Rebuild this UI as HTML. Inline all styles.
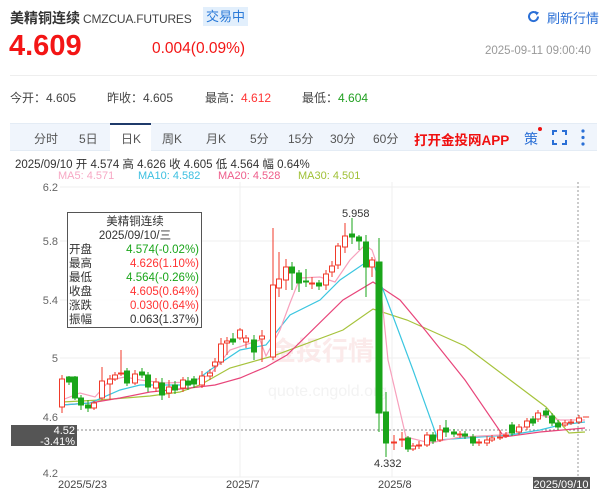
<!DOCTYPE html>
<html><head><meta charset="utf-8"><style>
*{margin:0;padding:0;box-sizing:border-box}
body{width:600px;height:489px;background:#fff;font-family:"Liberation Sans","Noto Sans CJK SC",sans-serif;position:relative;overflow:hidden;color:#333}
.a{position:absolute;white-space:nowrap}
</style></head><body>
<div class="a" style="left:10px;top:8px;font-size:14px;color:#333"><b style="font-weight:600">美精铜连续</b><span style="font-size:12px;color:#444;margin-left:3px;letter-spacing:-0.2px">CMZCUA.FUTURES</span></div>
<div class="a" style="left:203px;top:7px;width:45px;height:19px;background:#e2effc;color:#2a7ad8;font-size:13px;text-align:center;line-height:19px">交易中</div>
<svg class="a" style="left:527px;top:10px" width="13" height="13" viewBox="0 0 13 13"><path d="M11 6.5A4.5 4.5 0 1 1 9.5 3.2" fill="none" stroke="#2a6fd6" stroke-width="2"/><path d="M8 1L12 2.5 9.5 5.5Z" fill="#2a6fd6"/></svg>
<div class="a" style="left:547px;top:8px;font-size:13px;color:#2a6fd6">刷新行情</div>
<div class="a" style="left:9px;top:30px;font-size:29px;font-weight:bold;color:#f31515">4.609</div>
<div class="a" style="left:152px;top:40px;font-size:15.5px;color:#f31515">0.004(0.09%)</div>
<div class="a" style="left:485px;top:45px;font-size:11.5px;color:#999">2025-09-11 09:00:40</div>
<div class="a" style="left:10px;top:75px;width:587px;height:1px;background:#eee"></div>
<div class="a" style="left:10px;top:89px;font-size:12px;color:#444">今开：4.605</div>
<div class="a" style="left:107px;top:89px;font-size:12px;color:#444">昨收：4.605</div>
<div class="a" style="left:205px;top:89px;font-size:12px;color:#444">最高：<span style="color:#f33">4.612</span></div>
<div class="a" style="left:302px;top:89px;font-size:12px;color:#444">最低：<span style="color:#22a022">4.604</span></div>
<div class="a" style="left:10px;top:123px;width:587px;height:28px;background:#f0f5fc;border-top:1px solid #e4ecf5;border-bottom:1px solid #e4ecf5"></div>
<div class="a" style="left:110px;top:123px;width:41px;height:28px;background:#fff;border-top:2px solid #1f3a6a"></div>
<div class="a" style="left:0;top:130px;font-size:12px;color:#555;width:600px">
<span class="a" style="left:34px">分时</span><span class="a" style="left:79px">5日</span><span class="a" style="left:121px">日K</span><span class="a" style="left:162px">周K</span><span class="a" style="left:206px">月K</span><span class="a" style="left:250px">5分</span><span class="a" style="left:288px">15分</span><span class="a" style="left:330px">30分</span><span class="a" style="left:373px">60分</span></div>
<div class="a" style="left:414px;top:129px;font-size:13.5px;font-weight:bold;color:#f01010">打开金投网APP</div>
<div class="a" style="left:524px;top:129px;font-size:14px;color:#2a6fd6">策</div>
<div class="a" style="left:538px;top:127px;width:4px;height:4px;border-radius:50%;background:#e11"></div>
<svg class="a" style="left:552px;top:130px" width="15" height="15" viewBox="0 0 15 15" fill="none" stroke="#2a6fd6" stroke-width="2"><path d="M1 5V1H5M10 1H14V5M14 10V14H10M5 14H1V10"/></svg>
<svg class="a" style="left:581px;top:129px" width="4" height="17"><circle cx="2" cy="2" r="1.6" fill="#2a6fd6"/><circle cx="2" cy="8.5" r="1.6" fill="#2a6fd6"/><circle cx="2" cy="15" r="1.6" fill="#2a6fd6"/></svg>
<div class="a" style="left:15px;top:156px;font-size:11.5px;color:#333">2025/09/10 开 4.574 高 4.626 收 4.605 低 4.564 幅 0.64%</div>
<div class="a" style="left:58px;top:170px;font-size:11px;color:#f7a8c4">MA5: 4.571</div>
<div class="a" style="left:138px;top:170px;font-size:11px;color:#3bbfe0">MA10: 4.582</div>
<div class="a" style="left:218px;top:170px;font-size:11px;color:#ee5c8a">MA20: 4.528</div>
<div class="a" style="left:298px;top:170px;font-size:11px;color:#9fc035">MA30: 4.501</div>
<svg class="a" style="left:0;top:0" width="600" height="489">
<g stroke="#efefef" stroke-width="1">
<line x1="60" y1="187" x2="590" y2="187"/><line x1="60" y1="241" x2="590" y2="241"/><line x1="60" y1="300" x2="590" y2="300"/><line x1="60" y1="358" x2="590" y2="358"/><line x1="60" y1="417" x2="590" y2="417"/><line x1="60" y1="477" x2="590" y2="477"/>
<line x1="240" y1="182" x2="240" y2="477"/><line x1="392" y1="182" x2="392" y2="477"/>
</g>
<g font-size="11" fill="#666" text-anchor="end"><text x="58" y="191">6.2</text><text x="58" y="245">5.8</text><text x="58" y="304">5.4</text><text x="58" y="362">5</text><text x="58" y="421">4.6</text><text x="58" y="477">4.2</text></g>
<text x="270" y="360" font-size="26" fill="#fbeaea" font-weight="bold">金投行情</text>
<text x="268" y="396" font-size="16" fill="#f3f3f3">quote.cngold.org</text>
<line x1="578" y1="182" x2="578" y2="477" stroke="#999" stroke-dasharray="2,2"/>
<line x1="77" y1="430" x2="590" y2="430" stroke="#888" stroke-dasharray="2,2"/>
<g fill="none" stroke-width="1.2">
<polyline stroke="#a6c33c" points="62,402 100,400 150,396 180,392 200,385 230,368 273,356 343,330 373,309 407,320 465,346 546,407 569,433 585,432"/>
<polyline stroke="#e8457a" points="62,405 90,403 120,398 150,392 190,388 215,385 240,378 266,367 287,355 343,300 373,282 400,300 425,330 465,380 504,437 540,432 585,428"/>
<polyline stroke="#3bc6e0" points="62,405 90,403 120,390 140,385 170,385 190,385 210,370 240,350 266,345 290,315 320,300 340,280 365,263 372,260 413,370 438,440 480,437 510,435 540,430 560,425 585,422"/>
<polyline stroke="#f7a0bc" points="62,400 80,393 95,397 110,380 125,377 140,380 165,383 190,382 210,375 230,350 260,340 266,356 280,330 290,303 300,278 320,277 335,282 350,260 365,245 372,250 379,270 388,360 406,437 430,443 460,437 500,435 520,430 540,415 560,420 585,420"/>
</g>
<g stroke-width="1">
<g stroke="#f03a2a" fill="#fff">
<line x1="62" y1="375" x2="62" y2="413"/><rect x="59.5" y="379" width="5" height="28"/>
<line x1="94" y1="401" x2="94" y2="410"/><rect x="91.5" y="403" width="5" height="5"/>
<line x1="102" y1="367" x2="102" y2="400"/><rect x="99.5" y="381" width="5" height="17"/>
<line x1="110" y1="375" x2="110" y2="400"/><rect x="107.5" y="379" width="5" height="5"/>
<line x1="115" y1="372" x2="115" y2="381"/><rect x="112.5" y="375" width="5" height="4"/>
<line x1="121" y1="350" x2="121" y2="376"/><rect x="118.5" y="373" width="5" height="1"/>
<line x1="135" y1="370" x2="135" y2="385"/><rect x="132.5" y="374" width="5" height="9"/>
<line x1="156" y1="378" x2="156" y2="392"/><rect x="153.5" y="382" width="5" height="6"/>
<line x1="169" y1="380" x2="169" y2="398"/><rect x="166.5" y="387" width="5" height="6"/>
<line x1="183" y1="377" x2="183" y2="392"/><rect x="180.5" y="380" width="5" height="8"/>
<line x1="202" y1="371" x2="202" y2="388"/><rect x="199.5" y="376" width="5" height="9"/>
<line x1="210" y1="369" x2="210" y2="380"/><rect x="207.5" y="373" width="5" height="3"/>
<line x1="215" y1="358" x2="215" y2="372"/><rect x="212.5" y="362" width="5" height="4"/>
<line x1="221" y1="338" x2="221" y2="365"/><rect x="218.5" y="344" width="5" height="18"/>
<line x1="227" y1="337" x2="227" y2="355"/><rect x="224.5" y="341" width="5" height="2"/>
<line x1="240" y1="328" x2="240" y2="340"/><rect x="237.5" y="330" width="5" height="8"/>
<line x1="246" y1="335" x2="246" y2="348"/><rect x="243.5" y="338" width="5" height="4"/>
<line x1="262" y1="330" x2="262" y2="362"/><rect x="259.5" y="336" width="5" height="3"/>
<line x1="273" y1="228" x2="273" y2="360"/><rect x="270.5" y="285" width="5" height="72"/>
<line x1="279" y1="252" x2="279" y2="297"/><rect x="276.5" y="279" width="5" height="9"/>
<line x1="286" y1="259" x2="286" y2="290"/><rect x="283.5" y="267" width="5" height="13"/>
<line x1="312" y1="277" x2="312" y2="289"/><rect x="309.5" y="283" width="5" height="1"/>
<line x1="326" y1="270" x2="326" y2="290"/><rect x="323.5" y="274" width="5" height="11"/>
<line x1="332" y1="261" x2="332" y2="277"/><rect x="329.5" y="266" width="5" height="6"/>
<line x1="338" y1="243" x2="338" y2="269"/><rect x="335.5" y="246" width="5" height="19"/>
<line x1="345" y1="223" x2="345" y2="253"/><rect x="342.5" y="236" width="5" height="11"/>
<line x1="372" y1="257" x2="372" y2="277"/><rect x="369.5" y="260" width="5" height="7"/>
<line x1="394" y1="435" x2="394" y2="450"/><rect x="391.5" y="442" width="5" height="1"/>
<line x1="402" y1="432" x2="402" y2="447"/><rect x="399.5" y="439" width="5" height="1"/>
<line x1="413" y1="443" x2="413" y2="451"/><rect x="410.5" y="446" width="5" height="3"/>
<line x1="419" y1="441" x2="419" y2="449"/><rect x="416.5" y="445" width="5" height="1"/>
<line x1="427" y1="432" x2="427" y2="447"/><rect x="424.5" y="435" width="5" height="10"/>
<line x1="440" y1="425" x2="440" y2="442"/><rect x="437.5" y="430" width="5" height="10"/>
<line x1="460" y1="431" x2="460" y2="438"/><rect x="457.5" y="434" width="5" height="1"/>
<line x1="479" y1="439" x2="479" y2="446"/><rect x="476.5" y="442" width="5" height="1"/>
<line x1="487" y1="436" x2="487" y2="446"/><rect x="484.5" y="440" width="5" height="3"/>
<line x1="492" y1="435" x2="492" y2="442"/><rect x="489.5" y="438" width="5" height="2"/>
<line x1="500" y1="430" x2="500" y2="440"/><rect x="497.5" y="437" width="5" height="1"/>
<line x1="506" y1="432" x2="506" y2="438"/><rect x="503.5" y="435" width="5" height="1"/>
<line x1="519" y1="424" x2="519" y2="435"/><rect x="516.5" y="427" width="5" height="5"/>
<line x1="527" y1="418" x2="527" y2="430"/><rect x="524.5" y="421" width="5" height="6"/>
<line x1="538" y1="410" x2="538" y2="422"/><rect x="535.5" y="413" width="5" height="6"/>
<line x1="565" y1="420" x2="565" y2="427"/><rect x="562.5" y="423" width="5" height="2"/>
<line x1="571" y1="419" x2="571" y2="425"/><rect x="568.5" y="422" width="5" height="1"/>
<line x1="579" y1="415" x2="579" y2="424"/><rect x="576.5" y="418" width="5" height="4"/>
<line x1="583" y1="417" x2="589" y2="417"/>
</g>
<g stroke="#1aa51a" fill="#1aa51a">
<line x1="69" y1="376" x2="69" y2="385"/><rect x="66.5" y="377" width="5" height="5"/>
<line x1="75" y1="376" x2="75" y2="400"/><rect x="72.5" y="377" width="5" height="21"/>
<line x1="81" y1="395" x2="81" y2="410"/><rect x="78.5" y="398" width="5" height="7"/>
<line x1="88" y1="400" x2="88" y2="412"/><rect x="85.5" y="405" width="5" height="3"/>
<line x1="127" y1="368" x2="127" y2="386"/><rect x="124.5" y="371" width="5" height="12"/>
<line x1="142" y1="368" x2="142" y2="378"/><rect x="139.5" y="372" width="5" height="3"/>
<line x1="148" y1="372" x2="148" y2="392"/><rect x="145.5" y="375" width="5" height="12"/>
<line x1="162" y1="378" x2="162" y2="400"/><rect x="159.5" y="383" width="5" height="12"/>
<line x1="175" y1="381" x2="175" y2="394"/><rect x="172.5" y="385" width="5" height="5"/>
<line x1="188" y1="377" x2="188" y2="390"/><rect x="185.5" y="381" width="5" height="4"/>
<line x1="194" y1="376" x2="194" y2="388"/><rect x="191.5" y="379" width="5" height="5"/>
<line x1="233" y1="333" x2="233" y2="345"/><rect x="230.5" y="339" width="5" height="3"/>
<line x1="254" y1="335" x2="254" y2="360"/><rect x="251.5" y="340" width="5" height="12"/>
<line x1="292" y1="262" x2="292" y2="290"/><rect x="289.5" y="267" width="5" height="6"/>
<line x1="299" y1="270" x2="299" y2="292"/><rect x="296.5" y="273" width="5" height="10"/>
<line x1="306" y1="269" x2="306" y2="287"/><rect x="303.5" y="281" width="5" height="1"/>
<line x1="319" y1="280" x2="319" y2="290"/><rect x="316.5" y="283" width="5" height="3"/>
<line x1="352" y1="218" x2="352" y2="244"/><rect x="349.5" y="234" width="5" height="3"/>
<line x1="359" y1="235" x2="359" y2="250"/><rect x="356.5" y="237" width="5" height="4"/>
<line x1="366" y1="235" x2="366" y2="297"/><rect x="363.5" y="242" width="5" height="25"/>
<line x1="379" y1="238" x2="379" y2="432"/><rect x="376" y="262" width="6" height="151"/>
<line x1="386" y1="392" x2="386" y2="457"/><rect x="383.5" y="412" width="5" height="31"/>
<line x1="408" y1="436" x2="408" y2="452"/><rect x="405.5" y="438" width="5" height="11"/>
<line x1="433" y1="432" x2="433" y2="444"/><rect x="430.5" y="435" width="5" height="6"/>
<line x1="446" y1="420" x2="446" y2="437"/><rect x="443.5" y="428" width="5" height="4"/>
<line x1="454" y1="429" x2="454" y2="437"/><rect x="451.5" y="432" width="5" height="2"/>
<line x1="465" y1="431" x2="465" y2="439"/><rect x="462.5" y="434" width="5" height="2"/>
<line x1="473" y1="434" x2="473" y2="446"/><rect x="470.5" y="437" width="5" height="6"/>
<line x1="512" y1="422" x2="512" y2="436"/><rect x="509.5" y="425" width="5" height="8"/>
<line x1="533" y1="416" x2="533" y2="426"/><rect x="530.5" y="419" width="5" height="4"/>
<line x1="546" y1="408" x2="546" y2="418"/><rect x="543.5" y="411" width="5" height="4"/>
<line x1="552" y1="413" x2="552" y2="426"/><rect x="549.5" y="416" width="5" height="7"/>
<line x1="558" y1="420" x2="558" y2="430"/><rect x="555.5" y="423" width="5" height="4"/>
</g>
</g>
<text x="342" y="217" font-size="11" fill="#333">5.958</text>
<text x="374" y="467" font-size="11" fill="#333">4.332</text>
<rect x="11" y="425" width="66" height="21" fill="#555"/>
<text x="75" y="434" font-size="11" fill="#fff" text-anchor="end">4.52</text>
<text x="75" y="445" font-size="11" fill="#fff" text-anchor="end">-3.41%</text>
<rect x="533" y="477" width="57" height="12" fill="#555"/>
<text x="561" y="488" font-size="11" fill="#fff" text-anchor="middle">2025/09/10</text>
<g font-size="11" fill="#444"><text x="58" y="488">2025/5/23</text><text x="226" y="488">2025/7</text><text x="378" y="488">2025/8</text></g>
<rect x="67.5" y="212.5" width="134" height="115" fill="#fff" fill-opacity="0.92" stroke="#555"/>
<g font-size="11.5"><text x="135" y="225" text-anchor="middle" fill="#333">美精铜连续</text><text x="135" y="239" text-anchor="middle" fill="#333">2025/09/10/三</text>
<g fill="#333"><text x="69" y="253">开盘</text><text x="69" y="267">最高</text><text x="69" y="281">最低</text><text x="69" y="295">收盘</text><text x="69" y="309">涨跌</text><text x="69" y="323">振幅</text></g>
<g text-anchor="end"><text x="199" y="253" fill="#1aa51a">4.574(-0.02%)</text><text x="199" y="267" fill="#f33">4.626(1.10%)</text><text x="199" y="281" fill="#1aa51a">4.564(-0.26%)</text><text x="199" y="295" fill="#f33">4.605(0.64%)</text><text x="199" y="309" fill="#f33">0.030(0.64%)</text><text x="199" y="323" fill="#333">0.063(1.37%)</text></g></g>
</svg>
</body></html>
